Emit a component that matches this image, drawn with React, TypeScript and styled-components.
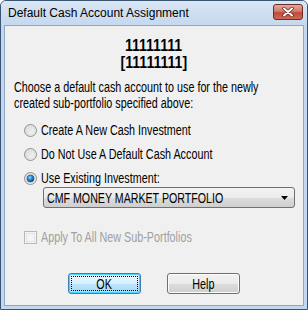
import React from 'react';
import styled, { createGlobalStyle } from 'styled-components';

const GlobalStyle = createGlobalStyle`
  html, body {
    margin: 0;
    padding: 0;
    background: #ffffff;
  }
`;

const Window = styled.div`
  box-sizing: border-box;
  width: 308px;
  height: 310px;
  display: flex;
  flex-direction: column;
  background: #c3d7ee;
  border: 1px solid #3a5474;
  border-radius: 6px 6px 0 0;
  overflow: hidden;
`;

const TitleBar = styled.div`
  height: 24px;
  display: flex;
  align-items: center;
  justify-content: space-between;
  padding: 0 4px 0 7px;
  background: linear-gradient(#d9e6f4, #c5d8ee);
`;

const TitleText = styled.span`
  font-family: "Liberation Sans", Arial, sans-serif;
  font-size: 12px;
  color: #000;
`;

const CloseButton = styled.div`
  width: 28px;
  height: 14px;
  margin-top: -2px;
  display: flex;
  align-items: center;
  justify-content: center;
  border: 1px solid #6d2a24;
  border-radius: 3px;
  background: linear-gradient(#e3a99e 0%, #d27a6c 45%, #c04a38 55%, #cf6a52 100%);
`;

const Client = styled.div`
  flex: 1;
  margin: 0 3px 3px 3px;
  background: #f0f0f0;
  border: 1px solid #8fa8c5;
  display: flex;
  flex-direction: column;
  font-family: "Liberation Sans", Arial, sans-serif;
  font-size: 14px;
  line-height: 16px;
  color: #000;
`;

// the dialog font is a narrow sans; Liberation Sans squeezed horizontally
const Narrow = styled.span<{ $sx?: number; $center?: boolean; $block?: boolean }>`
  display: ${({ $block }) => ($block ? 'block' : 'inline-block')};
  white-space: nowrap;
  transform: scaleX(${({ $sx }) => $sx ?? 0.77});
  transform-origin: ${({ $center }) => ($center ? 'center' : 'left')} center;
`;

const Heading = styled.div`
  margin-top: 11px;
  display: flex;
  flex-direction: column;
  align-items: center;
  font-weight: bold;
  font-size: 16px;
  line-height: 17px;
`;

const Prompt = styled.div`
  margin: 8px 0 0 9px;
`;

const Options = styled.div`
  margin: 11px 0 0 19px;
  display: flex;
  flex-direction: column;
  gap: 8px;
`;

const OptionRow = styled.label<{ $disabled?: boolean }>`
  display: flex;
  align-items: center;
  gap: 4px;
  height: 16px;
  color: ${({ $disabled }) => ($disabled ? '#a0a0a0' : '#000')};
`;

const Combo = styled.div`
  box-sizing: border-box;
  margin: 1px 8px 0 38px;
  height: 21px;
  display: flex;
  align-items: center;
  justify-content: space-between;
  padding: 0 6px 0 3px;
  border: 1px solid #707070;
  border-radius: 3px;
  background: linear-gradient(#f2f2f2 0%, #ebebeb 50%, #dddddd 51%, #cfcfcf 100%);
`;

const CheckRow = styled(OptionRow)`
  margin: 21px 0 0 19px;
`;

const ButtonRow = styled.div`
  margin-top: auto;
  margin-bottom: 11px;
  display: flex;
  justify-content: center;
  gap: 26px;
  padding-right: 1px;
`;

const Button = styled.div<{ $default?: boolean }>`
  box-sizing: border-box;
  width: 73px;
  height: 21px;
  display: flex;
  align-items: center;
  justify-content: center;
  border-radius: 3px;
  border: 1px solid ${({ $default }) => ($default ? '#3c7fb1' : '#707070')};
  background: ${({ $default }) =>
    $default
      ? 'linear-gradient(#eaf6fd 0%, #d9f0fc 50%, #bee6fd 51%, #a7d9f5 100%)'
      : 'linear-gradient(#f2f2f2 0%, #ebebeb 50%, #dddddd 51%, #cfcfcf 100%)'};
  box-shadow: ${({ $default }) => ($default ? 'inset 0 0 0 1px #48d3fb' : 'inset 0 0 0 1px #fcfcfc')};
`;

const FocusRing = styled.span`
  box-sizing: border-box;
  width: 65px;
  height: 13px;
  display: flex;
  align-items: center;
  justify-content: center;
  outline: 1px dotted #000;
`;

function Radio({ checked }: { checked?: boolean }) {
  return (
    <svg width="13" height="13" viewBox="0 0 13 13">
      <defs>
        <linearGradient id="rb" x1="0" y1="0" x2="1" y2="1">
          <stop offset="0" stopColor="#d8d8d8" />
          <stop offset="1" stopColor="#f8f8f8" />
        </linearGradient>
        <radialGradient id="rd" cx="0.4" cy="0.35" r="0.7">
          <stop offset="0" stopColor="#8ad8ff" />
          <stop offset="0.5" stopColor="#1e8ad0" />
          <stop offset="1" stopColor="#0a3f7a" />
        </radialGradient>
      </defs>
      <circle cx="6.5" cy="6.5" r="6" fill="url(#rb)" stroke="#8e8f8f" />
      <circle cx="6.5" cy="6.5" r="4.5" fill="none" stroke="#dcdcdc" />
      {checked && <circle cx="6.5" cy="6.5" r="3.5" fill="url(#rd)" stroke="#1b4b7d" strokeWidth="0.6" />}
    </svg>
  );
}

function CheckBox() {
  return (
    <svg width="13" height="13" viewBox="0 0 13 13">
      <rect x="0.5" y="0.5" width="12" height="12" fill="#f4f4f4" stroke="#b8b8b8" />
      <rect x="2.5" y="2.5" width="8" height="8" fill="none" stroke="#e4e4e4" />
    </svg>
  );
}

export default function App() {
  return (
    <>
      <GlobalStyle />
      <Window>
        <TitleBar>
          <TitleText>Default Cash Account Assignment</TitleText>
          <CloseButton>
            <svg width="12" height="10" viewBox="0 0 12 10">
              <path d="M2 1.5 L10 8.5 M10 1.5 L2 8.5" stroke="#5a2620" strokeWidth="3.4" strokeLinecap="round" />
              <path d="M2 1.5 L10 8.5 M10 1.5 L2 8.5" stroke="#ffffff" strokeWidth="2" strokeLinecap="round" />
            </svg>
          </CloseButton>
        </TitleBar>
        <Client>
          <Heading>
            <Narrow $sx={0.88} $center>11111111</Narrow>
            <Narrow $sx={0.88} $center>[11111111]</Narrow>
          </Heading>
          <Prompt>
            <Narrow $block>Choose a default cash account to use for the newly</Narrow>
            <Narrow $block>created sub-portfolio specified above:</Narrow>
          </Prompt>
          <Options>
            <OptionRow>
              <Radio />
              <Narrow>Create A New Cash Investment</Narrow>
            </OptionRow>
            <OptionRow>
              <Radio />
              <Narrow>Do Not Use A Default Cash Account</Narrow>
            </OptionRow>
            <OptionRow>
              <Radio checked />
              <Narrow>Use Existing Investment:</Narrow>
            </OptionRow>
          </Options>
          <Combo>
            <Narrow $sx={0.76}>CMF MONEY MARKET PORTFOLIO</Narrow>
            <svg width="7" height="4" viewBox="0 0 7 4">
              <path d="M0 0 H7 L3.5 4 Z" fill="#000" />
            </svg>
          </Combo>
          <CheckRow $disabled>
            <CheckBox />
            <Narrow>Apply To All New Sub-Portfolios</Narrow>
          </CheckRow>
          <ButtonRow>
            <Button $default>
              <FocusRing>
                <Narrow $center>OK</Narrow>
              </FocusRing>
            </Button>
            <Button>
              <Narrow $center>Help</Narrow>
            </Button>
          </ButtonRow>
        </Client>
      </Window>
    </>
  );
}
